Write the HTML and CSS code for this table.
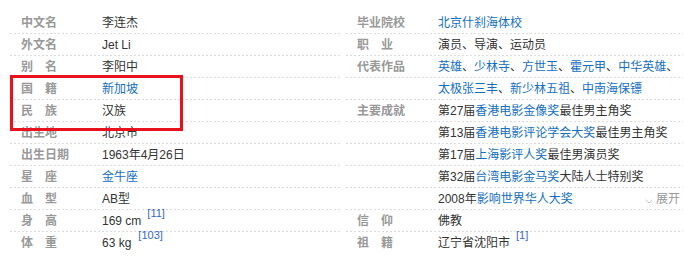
FILE: index.html
```html
<!DOCTYPE html>
<html lang="zh-CN">
<head>
<meta charset="utf-8">
<link rel="stylesheet" href="styles.css">
</head>
<body>
<div class="basic-info">
  <dl class="col col-left">
    <div class="row"><dt>中文名</dt><dd>李连杰</dd></div>
    <div class="row"><dt>外文名</dt><dd>Jet Li</dd></div>
    <div class="row"><dt>别　名</dt><dd>李阳中</dd></div>
    <div class="row"><dt>国　籍</dt><dd><a>新加坡</a></dd></div>
    <div class="row"><dt>民　族</dt><dd>汉族</dd></div>
    <div class="row"><dt>出生地</dt><dd>北京市</dd></div>
    <div class="row"><dt>出生日期</dt><dd>1963年4月26日</dd></div>
    <div class="row"><dt>星　座</dt><dd><a>金牛座</a></dd></div>
    <div class="row"><dt>血　型</dt><dd>AB型</dd></div>
    <div class="row"><dt>身　高</dt><dd>169 cm<sup class="ref">[11]</sup></dd></div>
    <div class="row"><dt>体　重</dt><dd>63 kg<sup class="ref ref-tight">[103]</sup></dd></div>
  </dl>
  <dl class="col col-right">
    <div class="row"><dt>毕业院校</dt><dd><a>北京什刹海体校</a></dd></div>
    <div class="row"><dt>职　业</dt><dd>演员、导演、运动员</dd></div>
    <div class="row"><dt>代表作品</dt><dd><a>英雄</a>、<a>少林寺</a>、<a>方世玉</a>、<a>霍元甲</a>、<a>中华英雄</a>、</dd></div>
    <div class="row"><dt></dt><dd><a>太极张三丰</a>、<a>新少林五祖</a>、<a>中南海保镖</a></dd></div>
    <div class="row"><dt>主要成就</dt><dd>第27届<a>香港电影金像奖</a>最佳男主角奖</dd></div>
    <div class="row"><dt></dt><dd>第13届<a>香港电影评论学会大奖</a>最佳男主角奖</dd></div>
    <div class="row"><dt></dt><dd>第17届<a>上海影评人奖</a>最佳男演员奖</dd></div>
    <div class="row"><dt></dt><dd>第32届<a>台湾电影金马奖</a>大陆人士特别奖</dd></div>
    <div class="row"><dt></dt><dd>2008年<a>影响世界华人大奖</a></dd><span class="toggle"><svg class="chev" width="8" height="5" viewBox="0 0 8 5"><path d="M0.5 0.5 L4 4 L7.5 0.5" fill="none" stroke="#c8c8c8" stroke-width="1"/></svg>展开</span></div>
    <div class="row"><dt>信　仰</dt><dd>佛教</dd></div>
    <div class="row"><dt>祖　籍</dt><dd>辽宁省沈阳市<sup class="ref">[1]</sup></dd></div>
  </dl>
  <div class="highlight"></div>
</div>
</body>
</html>
```

FILE: styles.css
```css
* { box-sizing: border-box; }
html, body { margin: 0; padding: 0; background: #fff; }
body {
  font-family: "Liberation Sans", "Noto Sans CJK SC", sans-serif;
  font-size: 12px;
  color: #333;
}
.basic-info {
  position: relative;
  display: flex;
  gap: 6px;
  padding: 12px 2px 0 10px;
}
.col { margin: 0; }
.col-left { width: 330px; }
.col-right { flex: 1; }
.row {
  display: flex;
  height: 22px;
  line-height: 21px;
  padding-top: 1px;
  background-image: linear-gradient(to right, #dcdcdc 50%, transparent 50%);
  background-size: 4px 1px;
  background-repeat: repeat-x;
  background-position: left bottom;
  white-space: nowrap;
}
.col .row:last-child { background-image: none; }
dt {
  width: 92px;
  padding-left: 11px;
  font-weight: bold;
  color: #999;
  flex: none;
}
dd { margin: 0; flex: 1; }
a { color: #136ec2; text-decoration: none; }
.ref {
  color: #3366cc;
  font-size: 11px;
  vertical-align: 0;
  position: relative;
  top: -8px;
  margin-left: 6px;
}
.ref-tight { margin-left: 7px; }
.toggle {
  color: #999;
  display: flex;
  align-items: center;
  gap: 3px;
  padding-right: 3px;
}
.chev { margin-top: 4px; }
.highlight {
  position: absolute;
  left: 10px;
  top: 75px;
  width: 173px;
  height: 56px;
  border: 3px solid #e8121c;
}
```
